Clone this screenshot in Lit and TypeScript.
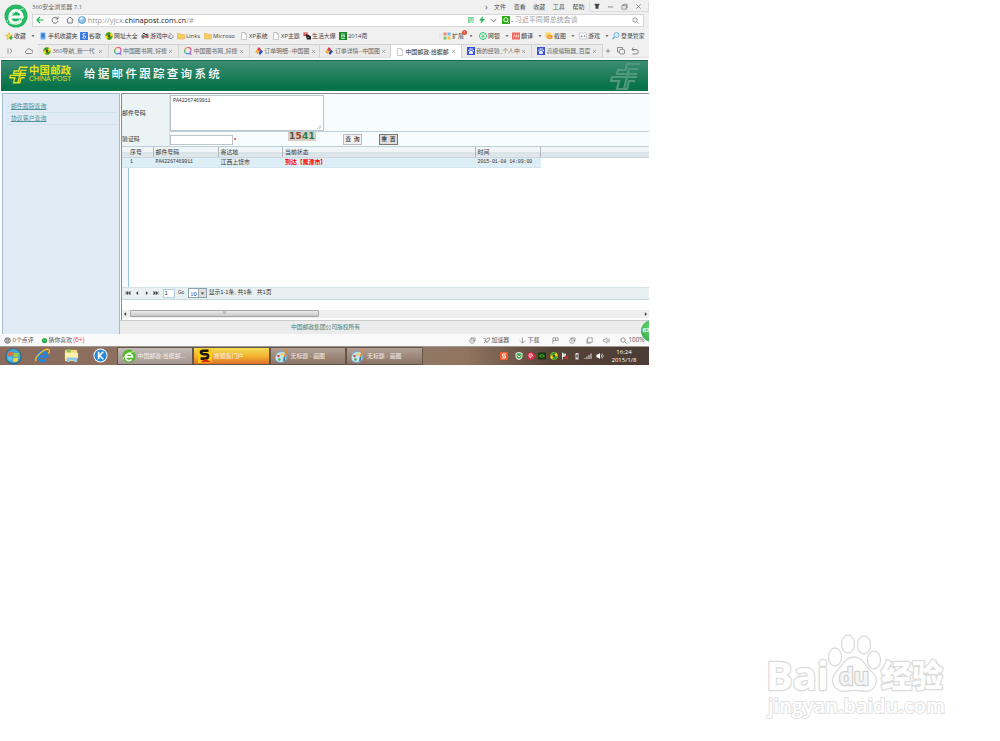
import { LitElement, html, svg, css } from 'lit';
import { customElement, property } from 'lit/decorators.js';

const icons: Record<string, unknown> = {
  star: svg`<path d="M8 1l2 5 5 .5-4 3.500 1 5-4-2.500-4 2.500 1-5-4-3.500L6 6z" fill="#ffe15a" stroke="#d9a520"/><path d="M12 8v7M8.500 11.500h7" stroke="#35ad4e" stroke-width="3"/>`,
  phone: svg`<rect x="3" y="1" width="10" height="14" rx="1" fill="#6aaef2"/><rect x="5" y="3" width="6" height="8" fill="#3478d8"/>`,
  google: svg`<rect width="16" height="16" rx="1" fill="#3b78e7"/><path d="M11 3H8a2 2.500 0 1 0 1 4.500M9 7c4 2 2 6-1 6s-4-4 1-4" fill="none" stroke="#fff" stroke-width="1.500"/>`,
  nav360: svg`<circle cx="8" cy="8" r="7.500" fill="#f8d90f"/><path d="M1 9a7 7 0 0 1 11-7L8 6C5 5 3 7 1 9zM15 7a7 7 0 0 1-11 7l4-4c3 1 5-1 7-3z" fill="#2d9e31"/><path d="M5 8h6M8 5v6" stroke="#123" stroke-width="2"/>`,
  game: svg`<path d="M1 6h6v7H1zM9 4h6v8H9z" fill="#777"/><path d="M3 5l3-3 3 4 3-3" stroke="#333" fill="none" stroke-width="2"/><path d="M5 9h6" stroke="#d44" stroke-width="2"/>`,
  folder: svg`<path d="M1 3h5l2 2h7v9H1z" fill="#f6cf63" stroke="#dfa93a"/>`,
  page: svg`<path d="M3 1h7l3 3v11H3z" fill="#fff" stroke="#999"/><path d="M10 1v3h3" fill="none" stroke="#999"/>`,
  life: svg`<path d="M1 1h8v7H1z" fill="#c33"/><path d="M5 6l5-1 6 4v6H8z" fill="#222"/><path d="M3 3h4M3 6h2M9 11h3" stroke="#fff"/>`,
  bean: svg`<rect width="16" height="16" fill="#168a2b"/><path d="M4 4h8M5 7h6v3H5zM4 13h8" stroke="#fff" stroke-width="1.300" fill="none"/>`,
  grid: svg`<path d="M1 1h6v6H1z" fill="#f58a6a"/><path d="M9 1h6v6H9z" fill="#6db8ef"/><path d="M1 9h6v6H1z" fill="#77c977"/><path d="M9 9h6v6H9z" fill="#f6c34c"/>`,
  bank: svg`<circle cx="8" cy="8" r="7" fill="#dff8e8" stroke="#3cc47a" stroke-width="2"/><path d="M5 4l3 4 3-4M8 8v5M5 9h6" stroke="#3cc47a" stroke-width="1.500" fill="none"/>`,
  trans: svg`<rect y="1" width="16" height="14" fill="#ef6860"/><path d="M3 11l2-6 2 6M9 5v6M13 5v6M9 8h4" stroke="#fff" fill="none"/>`,
  cut: svg`<rect x="1" y="1" width="11" height="11" fill="#f7d26a"/><rect x="5" y="6" width="10" height="8" fill="#f09b31"/><path d="M7 11l2-2 3 3" stroke="#fff" fill="none"/>`,
  pad: svg`<rect x="1" y="2" width="14" height="12" fill="#fff" stroke="#889" stroke-dasharray="3 1"/><path d="M5 6v5M2.500 8.500h5" stroke="#678"/><circle cx="11" cy="8" r="1.500" fill="#678"/>`,
  key: svg`<circle cx="9" cy="6" r="5" fill="#dbeeff" stroke="#5aa6e2" stroke-width="1.500"/><path d="M5 10l-4 4" stroke="#5aa6e2" stroke-width="2.500"/>`,
  haosou: svg`<path d="M3 12A6 6 0 0 1 2 5" stroke="#3bb55c"/><path d="M2 5a6 6 0 0 1 6-4" stroke="#f08a2c"/><path d="M8 1a6 6 0 0 1 6 6" stroke="#ee4e86"/><path d="M14 7a6 6 0 0 1-4 6l5 2" stroke="#a25bd0"/><path d="M3 12a6 6 0 0 0 7 1" stroke="#39a5e8"/>`,
  order: svg`<path d="M8 0l4 5-4 4-4-4z" fill="#e33641"/><path d="M4 5l4 4-3 5-5-4z" fill="#f5b52b"/><path d="M12 5l4 4-6 7-3-4z" fill="#344aae"/>`,
  baidu: svg`<rect width="16" height="16" fill="#3653df"/><circle cx="4" cy="7" r="1.500"/><circle cx="6.500" cy="4" r="1.600"/><circle cx="10" cy="4" r="1.600"/><circle cx="12.500" cy="7" r="1.500"/><path d="M8 7c2 0 5 4 4 6-1 1-7 1-8 0-1-2 2-6 4-6z"/>`,
  collapse: svg`<path d="M4 3v10M8 3l4 5-4 5" fill="none" stroke="#777" stroke-width="1.500"/>`,
  cloud: svg`<path d="M4 13a3 3 0 0 1-1-6 5 5 0 0 1 9-1 3.500 3.500 0 0 1 1 7z" fill="none" stroke="#777" stroke-width="1.700"/>`,
  back: svg`<path d="M15 8H2M8 2L2 8l6 6" fill="none" stroke="#22b14c" stroke-width="2.400"/>`,
  reload: svg`<path d="M13 5a6 6 0 1 0 1 5M14 1v5H9" fill="none" stroke="#666" stroke-width="1.700"/>`,
  home: svg`<path d="M1 8l7-6 7 6M3.500 7v7h9V7" fill="none" stroke="#666" stroke-width="1.700"/>`,
  globe: svg`<circle cx="8" cy="8" r="7" fill="#8fc4ee" stroke="#4f93d0" stroke-width="1.500"/><path d="M3 6c2-4 6-4 8-2-2 3-4 2-5 5z" fill="#edf8ff"/>`,
  qr: svg`<path d="M1 1h5v5H1zM9 1h6v5H9zM1 9h5v6H1zM9 9h2v6M14 9v2M14 13v2" fill="none" stroke="#3cbf65" stroke-width="2"/>`,
  bolt: svg`<path d="M10 0L2 9h5l-2 7 9-10H9z" fill="#1fb952"/>`,
  down: svg`<path d="M2 5l6 6 6-6" fill="none" stroke="#555" stroke-width="2"/>`,
  soGreen: svg`<rect width="16" height="16" fill="#2bad13"/><circle cx="7.500" cy="7.500" r="4" fill="none" stroke="#fff" stroke-width="1.800"/><path d="M10 10l4 4" stroke="#fff" stroke-width="2"/>`,
  search: svg`<circle cx="7" cy="7" r="5" fill="none" stroke="#777" stroke-width="1.700"/><path d="M11 11l4 4" stroke="#777" stroke-width="1.700"/>`,
  shirt: svg`<path d="M1 3l4-2q3 3 6 0l4 2-2 4-1-1v9H4V6L3 7z" fill="#444"/>`,
  min: svg`<path d="M2 9h12" stroke="#555" stroke-width="1.500"/>`,
  max: svg`<path d="M2 6h10v8H2zM5 6V3h9v8h-2" fill="none" stroke="#555" stroke-width="1.300"/>`,
  close: svg`<path d="M3 3l10 10M13 3L3 13" stroke="#666" stroke-width="1.500"/>`,
  plus: svg`<path d="M8 2v12M2 8h12" stroke="#666" stroke-width="1.800"/>`,
  copy: svg`<path d="M1 4V1h10v3M1 4v6h3" fill="none" stroke="#666" stroke-width="1.400"/><rect x="5" y="5" width="10" height="9" rx="2" fill="none" stroke="#666" stroke-width="1.400"/>`,
  undo: svg`<path d="M5 1L2 5l4 4M2 5h8a4 4 0 0 1 0 9H3" fill="none" stroke="#666" stroke-width="1.600"/>`,
  face: svg`<circle cx="8" cy="8" r="6.500" fill="#ccc" stroke="#777" stroke-width="2"/><path d="M3 5h10M5 8h1M10 8h1M5 11h6" stroke="#555" stroke-width="1.500"/>`,
  dot: svg`<circle cx="8" cy="8" r="6" fill="#27ae4c"/><path d="M5 8h6" stroke="#8be0a0"/>`,
  refreshBox: svg`<circle cx="7" cy="9" r="5.500" fill="none" stroke="#777" stroke-width="1.400"/><path d="M5 6V2h9v6h-4M4 9h6" fill="none" stroke="#777" stroke-width="1.400"/>`,
  rocket: svg`<path d="M2 14l4-4M4 8l7-6h4v4l-6 7-1-3-4-2M1 3h5" fill="none" stroke="#666" stroke-width="1.500"/>`,
  dl: svg`<path d="M8 1v13M2 8l6 6 6-6" fill="none" stroke="#777" stroke-width="1.500"/>`,
  flag: svg`<path d="M2 15V2h12v6H2M8 2v6" fill="none" stroke="#777" stroke-width="1.500"/>`,
  win: svg`<rect x="4" y="2" width="10" height="10" fill="none" stroke="#777" stroke-width="1.500"/><path d="M2 5v9h9" fill="none" stroke="#777" stroke-width="1.500"/>`,
  sound: svg`<path d="M1 6h3l5-4v12l-5-4H1zM11 5q3 3 0 6M13 3q5 5 0 10" fill="none" stroke="#777" stroke-width="1.300"/>`,
  orb: svg`<circle cx="8" cy="8" r="7.800" fill="#28698f"/><circle cx="8" cy="7.500" r="6.600" fill="#4aa3cb"/><path d="M3 5q2-2 4.500-1L7 7.500q-2-1-4.500 0z" fill="#f06a32"/><path d="M8.500 4.500q2 1 4.500 0l-.5 3.500q-2 1-4.500 0z" fill="#9bd13b"/><path d="M2.500 8.500q2-1 4.500 0L6.500 12q-2-1-4 0z" fill="#5dc1f4"/><path d="M8 9q2 1 4.500 0L12 12.500q-2 1-4.500 0z" fill="#fbd63b"/>`,
  ie: svg`<path d="M3 9h10a5 5 0 1 0-1.500 3.500" fill="none" stroke="#2385dc" stroke-width="3"/><path d="M1 14C-1 10 11-1 15 2c1 1 0 3-1 4" fill="none" stroke="#f3ba2c" stroke-width="1.500"/>`,
  explorer: svg`<path d="M1 2h13v12H1z" fill="#f4db83"/><path d="M3 1h4v4H3z" fill="#83bd5b"/><path d="M1 5h14v6H1z" fill="#fff0ac"/><path d="M3 10h11v5h-3v-2H6v2H3z" fill="#8fcbe7"/>`,
  kugou: svg`<circle cx="8" cy="8" r="7.500" fill="#fff"/><circle cx="8" cy="8" r="6.500" fill="#2488da"/><path d="M6 4v8M11 4L7 8l4 4" fill="none" stroke="#fff" stroke-width="1.800"/>`,
  green: svg`<circle cx="8" cy="8" r="7.500" fill="#4fb92c"/><path d="M4 9h8a4 4 0 1 0-1 3" fill="none" stroke="#fff" stroke-width="2"/><path d="M1 12Q3 4 14 3" stroke="#d9f7a5" fill="none"/>`,
  sogou: svg`<rect width="16" height="16" fill="#ffca0a"/><path d="M12 2H6C2 2 3 6 7 6h2c4 0 3 5-1 5H3" fill="none" stroke="#1a1612" stroke-width="3"/><path d="M3 15l5-4 8 4z" fill="#d92516"/>`,
  paint: svg`<path d="M8 3c5 0 6 4 5 8-1 3-4 5-8 4-4 0-6-4-4-8 1-3 4-4 7-4z" fill="#c4e6f5" stroke="#6ea6cb"/><circle cx="4" cy="8" r="1.500" fill="#d74a3a"/><circle cx="8" cy="6" r="1.500" fill="#f3ca38"/><circle cx="5" cy="12" r="1.500" fill="#52a54c"/><path d="M14 0L11 9" stroke="#e48c2e" stroke-width="2.200"/><path d="M11 9l-1 5" stroke="#4779a5" stroke-width="2"/>`,
  sg: svg`<rect width="16" height="16" rx="2" fill="#f15d32"/><path d="M12 4H5v4h6v4H4" fill="none" stroke="#fff" stroke-width="2"/>`,
  shield: svg`<path d="M8 0l7 2v6c0 4-3 7-7 8-4-1-7-4-7-8V2z" fill="#eee"/><path d="M8 2l5 1.500V8c0 3-2 5-5 6-3-1-5-3-5-6V3.500z" fill="#43ad49"/><path d="M5 7l3 3 3-3" stroke="#fff" fill="none" stroke-width="2"/>`,
  music: svg`<circle cx="8" cy="8" r="7.500" fill="#dc2340"/><path d="M9 3q-6 0-5 5 1 4 4 4V5q4 0 4 4" fill="none" stroke="#fff" stroke-width="1.500"/>`,
  nvidia: svg`<rect y="1" width="16" height="14" fill="#173b13"/><path d="M2 8q5-7 12 0-7 6-12 0z" fill="#50aa22"/><circle cx="8" cy="8" r="2" fill="#183915"/>`,
  netx: svg`<path d="M2 3h8v7H2z" fill="#d9d9d9"/><path d="M3 1v14" stroke="#fff" stroke-width="1.500"/><path d="M8 8l6 6m0-6l-6 6" stroke="#e22" stroke-width="3"/>`,
  battery: svg`<path d="M5 2h6v13H5z" fill="#ddd"/><path d="M6 5h4v6H6z" fill="#777"/>`,
  signal: svg`<path d="M1 14v-2h2v2M5 14v-5h2v5M9 14V6h2v8M13 14V3h2v11" fill="#ddd"/>`,
  speaker: svg`<path d="M1 5h3l4-3v12l-4-3H1z" fill="#fff"/><path d="M10 5q3 3 0 6M12 3q5 5 0 10" stroke="#fff" fill="none" stroke-width="1.300"/>`,
  first: svg`<path d="M2 3v10M8 3L3 8l5 5zM14 3L9 8l5 5z" fill="#444" stroke="#444"/>`,
  prev: svg`<path d="M11 3L5 8l6 5z" fill="#444"/>`,
  next: svg`<path d="M5 3l6 5-6 5z" fill="#444"/>`,
  last: svg`<path d="M14 3v10M8 3l5 5-5 5zM2 3l5 5-5 5z" fill="#444" stroke="#444"/>`,
  caret: svg`<path d="M2 5h12l-6 7z" fill="#555"/>`,
};

@customElement('ui-icon')
export class UiIcon extends LitElement {
  @property({ type: String }) name = 'page';
  @property({ type: Number }) size = 8;

  static styles = css`
    :host { display: inline-flex; flex: none; }
    svg { display: block; }
    .haosou { fill: none; stroke-width: 2.2; }
    .baidu { fill: #fff; }
  `;

  render() {
    return html`<svg class="${this.name}" width="${this.size}" height="${this.size}" viewBox="0 0 16 16">${icons[this.name]}</svg>`;
  }
}

// [icon, label, width, has dropdown]
const bookmarks: [string, string, number, boolean?][] = [
  ['star', '收藏', 34, true],
  ['phone', '手机收藏夹', 41],
  ['google', '谷歌', 25],
  ['nav360', '网址大全', 36],
  ['game', '游戏中心', 36],
  ['folder', 'Links', 27],
  ['folder', 'Microso', 36],
  ['page', 'XP系统', 32],
  ['page', 'XP主题', 31],
  ['life', '生活大爆', 36],
  ['bean', '2014南', 36],
];

const tools: [string, string, number, boolean?][] = [
  ['grid', '扩展', 36, true],
  ['bank', '网银', 33, true],
  ['trans', '翻译', 33, true],
  ['cut', '截图', 34, true],
  ['pad', '游戏', 33, true],
  ['key', '登录管家', 33],
];

const tabs = [
  ['nav360', '360导航_新一代'],
  ['haosou', '中国图书网_好搜'],
  ['haosou', '中国图书网_好搜'],
  ['order', '订单明细--中国图'],
  ['order', '订单详情--中国图'],
  ['page', '中国邮政-给据邮'],
  ['baidu', '我的经验_个人中'],
  ['baidu', '高级编辑器_百度'],
];
const activeTab = 5;

@customElement('browser-chrome')
export class BrowserChrome extends LitElement {
  static styles = css`
    :host {
      display: block;
      height: 58px;
      background: #f0f0f0;
      color: #444;
      font: 5.9px/8px 'Open Sans', 'Noto Sans CJK SC', sans-serif;
      white-space: nowrap;
    }
    .top { display: grid; grid-template-columns: 32px 1fr; height: 28px; }
    .logo { padding: 4px 0 0 4px; }
    .title { display: flex; height: 13.500px; align-items: center; color: #666; font-size: 6px; }
    .menu { display: flex; margin-left: auto; height: 12px; align-items: center; color: #555; }
    .menu span { width: 19.600px; }
    .menu .more { width: 9px; font-size: 9px; }
    .menu span:last-child { width: 16.600px; }
    .win { display: flex; justify-content: space-between; align-items: center; width: 60px; height: 10px; padding: 0 6px 0 4px; border: 1px solid #ddd; border-top: 0; box-sizing: border-box; }
    .address { display: flex; align-items: center; box-sizing: border-box; height: 13px; margin-right: 5px; background: #fff; border: 1px solid #d6d6d6; }
    .btn { display: flex; width: 14.900px; height: 11px; align-items: center; justify-content: center; background: #f8f8f8; box-shadow: 1px 0 #e4e4e4; box-sizing: border-box; }
    .url { margin: 0 auto 0 2px; color: #999; font-size: 7.500px; }
    .url b { color: #222; font-weight: 400; }
    .quick { display: flex; align-items: center; gap: 4px; width: 34px; }
    .hot { color: #999; width: 121px; font-size: 7px; padding-left: 1px; }
    .hot b { color: #333; }
    .address .end { margin-right: 4px; }
    .marks { display: flex; height: 16px; align-items: center; padding: 0 4px 0 5px; box-sizing: border-box; }
    .mark { display: flex; align-items: center; gap: 1px; position: relative; }
    .mark .arrow { margin-left: 4px; }
    .gap { margin-left: auto; width: 6px; color: #bbb; }
    .badge { position: absolute; left: 19px; top: -2px; width: 5px; height: 5px; border-radius: 50%; background: #e84c31; color: #fff; font-size: 4px; line-height: 5px; text-align: center; }
    .tabs { display: flex; height: 14px; align-items: stretch; border-bottom: 1px solid #ddd; box-sizing: border-box; }
    .side { display: flex; align-items: center; width: 38px; gap: 11px; padding-left: 6px; box-sizing: border-box; }
    .tab { display: flex; align-items: center; width: 70.600px; box-sizing: border-box; padding: 0 5px; gap: 1.500px; background: #ebebeb; border: 1px solid #d2d2d2; border-bottom: 0; border-left-width: 0; color: #666; }
    .tab span { flex: 1; }
    .tab.active { background: #fff; color: #222; height: 14px; }
    .end-tabs { display: flex; align-items: center; gap: 6px; padding-left: 2px; }
  `;

  mark([icon, label, width, drop]: [string, string, number, boolean?]) {
    return html`
      <div class="mark" style="width:${width}px">
        <ui-icon name=${icon} .size=${8}></ui-icon>
        <span>${label}</span>
        ${drop ? html`<ui-icon class="arrow" name="caret" .size=${4}></ui-icon>` : ''}
        ${label === '扩展' ? html`<span class="badge">1</span>` : ''}
      </div>
    `;
  }

  render() {
    return html`
      <div class="top">
        <div class="logo">
          <svg width="24" height="24" viewBox="0 0 24 24">
            <circle cx="12" cy="12" r="11.500" fill="#27b863" />
            <path d="M6 13h12c0-8-11-9-12-1-1 8 8 9 11 4" fill="none" stroke="#fff" stroke-width="3" />
            <path d="M3 18C7 10 13 5 20 5M5 19q9 4 15-7" fill="none" stroke="#baf0ce" />
          </svg>
        </div>
        <div>
          <div class="title">
            360安全浏览器 7.1
            <div class="menu">
              <span class="more">›</span><span>文件</span><span>查看</span><span>收藏</span><span>工具</span><span>帮助</span>
            </div>
            <div class="win">
              <ui-icon name="shirt" .size=${6}></ui-icon>
              <ui-icon name="min" .size=${7}></ui-icon>
              <ui-icon name="max" .size=${7}></ui-icon>
              <ui-icon name="close" .size=${7}></ui-icon>
            </div>
          </div>
          <div class="address">
            <div class="btn"><ui-icon name="back" .size=${8}></ui-icon></div>
            <div class="btn"><ui-icon name="reload" .size=${8}></ui-icon></div>
            <div class="btn"><ui-icon name="home" .size=${8}></ui-icon></div>
            <ui-icon name="globe" .size=${8}></ui-icon>
            <div class="url">http://yjcx.<b>chinapost.com.cn</b>/#</div>
            <div class="quick">
              <ui-icon name="qr" .size=${6}></ui-icon>
              <ui-icon name="bolt" .size=${8}></ui-icon>
              <ui-icon name="down" .size=${7}></ui-icon>
            </div>
            <ui-icon name="soGreen" .size=${8}></ui-icon>
            <div class="hot"><b>.</b> 习近平同哥总统会谈</div>
            <ui-icon class="end" name="search" .size=${7}></ui-icon>
          </div>
        </div>
      </div>
      <div class="marks">
        ${bookmarks.map((b) => this.mark(b))}
        <span class="gap">⋮</span>
        ${tools.map((t) => this.mark(t))}
      </div>
      <div class="tabs">
        <div class="side"><ui-icon name="collapse" .size=${8}></ui-icon><ui-icon name="cloud" .size=${8}></ui-icon></div>
        ${tabs.map(([icon, label], i) => html`
          <div class="tab ${i === activeTab ? 'active' : ''}">
            <ui-icon name=${icon} .size=${8}></ui-icon>
            <span>${label}</span>
            <ui-icon name="close" .size=${5}></ui-icon>
          </div>
        `)}
        <div class="end-tabs">
          <ui-icon name="plus" .size=${6}></ui-icon>
          <ui-icon name="copy" .size=${8}></ui-icon>
          <ui-icon name="undo" .size=${8}></ui-icon>
        </div>
      </div>
    `;
  }
}

const emblem = svg`<path d="M30 2H17l-1.500 6H8l-1 4h20M28 7h-9l-5 20H7l2-8H1l1-4h25M25 19h-6l-2 8h-3" fill="none" stroke="currentColor" stroke-width="2.200"/>`;

@customElement('post-page')
export class PostPage extends LitElement {
  static styles = css`
    :host {
      display: block;
      height: 276px;
      background: #fff;
      color: #333;
      font: 5.9px/8px 'Liberation Sans', 'Noto Sans CJK SC', sans-serif;
      white-space: nowrap;
      overflow: hidden;
    }
    .banner { display: flex; box-sizing: border-box; height: 31px; margin: 2px 1px 2px; padding-left: 8px; background: linear-gradient(#3d8c73, #08734a 85%); border-top: 1px solid #1d6b4f; }
    .emblem { color: #e8e318; padding-top: 5px; width: 20px; }
    .brand { color: #e8e318; width: 55px; font-size: 7px; line-height: 7px; padding-top: 6px; }
    .brand b { display: block; font-size: 10.300px; line-height: 8px; letter-spacing: .3px; }
    .name { color: #fff; font: 500 11.500px/26px 'Liberation Serif', 'Noto Sans CJK SC', serif; letter-spacing: 2.300px; }
    .ghost { margin: 1px 8px 0 auto; color: #509980; }
    .cols { display: flex; height: 241px; }
    .nav { box-sizing: border-box; width: 117.500px; margin-left: 2px; padding: 7px 3px 0 4px; background: #e1ebf5; border: 1px solid #9fbbd6; border-bottom: 0; }
    .nav div { height: 11px; line-height: 11px; border-bottom: 1px solid #d0e2ec; color: #4f9297; }
    .nav u { margin-left: 2px; }
    .main { width: 529.500px; display: flex; flex-direction: column; }
    .frame { height: 227px; box-sizing: border-box; margin-left: 1.500px; border-left: 1px solid #8c8c8c; border-top: 1px solid #8c8c8c; }
    .row { display: grid; grid-template-columns: 48px 1fr; border-bottom: 1px solid #bdd0da; background: #f6fdfc; box-sizing: border-box; }
    .row.a { height: 38px; }
    .row.b { height: 14.500px; }
    .row label { display: flex; align-items: center; background: #ebf3f4; border-right: 1px solid #d3dfe6; }
    .area { box-sizing: border-box; width: 154px; height: 36px; margin: 1px 0; padding: 1px 2px; background: #fff; border: 1px solid #bcc6ca; font: 5px/8px 'Liberation Mono', monospace; letter-spacing: -.12px; display: flex; justify-content: space-between; }
    .area svg { align-self: flex-end; }
    .mono { font: 5px/9px 'Liberation Mono', monospace; letter-spacing: -.12px; }
    .fields { display: flex; }
    .text { width: 61px; height: 8px; margin: 2.500px 0 0; background: #fff; border: 1px solid #bcc6ca; }
    .req { color: #f00; font-weight: 700; width: 54px; padding: 4px 0 0 1px; }
    .captcha { width: 28px; height: 9px; margin-right: 27px; background: #d5cfc4; font: 700 9px/9px 'DejaVu Sans', sans-serif; text-align: center; color: #5d5148; letter-spacing: .3px; }
    .captcha i { font-style: normal; color: #a23a35; }
    .captcha em { font-style: normal; color: #367a45; }
    .btn { box-sizing: border-box; width: 19px; height: 11px; margin: 2px 17px 0 0; border: 1px solid #bbb; background: #f2f2f2; line-height: 9px; text-align: center; color: #111; word-spacing: 1px; }
    .btn.reset { background: #ddd; border-color: #777; }
    .head { display: flex; height: 11px; box-sizing: border-box; padding-left: 6px; line-height: 11px; background: linear-gradient(#f0f5f8 0 45%, #d9e4e9 55%, #dfe8ec); border-bottom: 1px solid #ccd5d9; }
    .head span { box-sizing: border-box; border-right: 1px solid #aebac2; padding-left: 2px; }
    .data { display: flex; width: 419px; height: 10px; box-sizing: border-box; line-height: 9px; background: #deeef6; border-bottom: 1px solid #d3e5ee; padding-left: 6px; }
    .data span { padding-left: 2px; box-sizing: border-box; }
    .hit { color: #f00; font-weight: 700; }
    .blank { height: 119px; width: 6px; border-right: 1px solid #94c5e2; background: #f6fafc; }
    .pager { display: flex; height: 13px; box-sizing: border-box; align-items: center; padding-left: 3px; background: #e8f0f2; border-top: 1px solid #d5e2e6; border-bottom: 1px solid #c5d8e2; gap: 3.400px; }
    .pno { width: 9px; height: 7px; border: 1px solid #b2cee0; background: #fff; padding-left: 1px; line-height: 7px; }
    .go { width: 7px; font-size: 4.700px; }
    .sel { display: flex; width: 16px; height: 8px; border: 1px solid #8aa2ad; background: #fff; padding-left: 1px; align-items: center; justify-content: space-between; font: 6.500px 'Liberation Serif', serif; }
    .drop { display: flex; width: 7px; height: 8px; background: #ddd; align-items: center; justify-content: center; box-shadow: -1px 0 #9aa; }
    .count { margin: -2px 0 0 -2px; letter-spacing: -.1px; }
    .bar { display: flex; height: 8px; align-items: center; margin-top: 10px; background: #eee; }
    .thumb { box-sizing: border-box; width: 189px; height: 7px; margin: 0 auto 0 2px; border: 1px solid #a6a6a6; border-radius: 1px; background: linear-gradient(#ececec, #c7c7c7); text-align: center; line-height: 4px; font-size: 4px; color: #777; }
    .foot { height: 14px; box-sizing: border-box; background: #ececec; border-top: 1px solid #ccc; line-height: 13px; color: #4b8173; text-indent: 171.500px; letter-spacing: -.15px; }
    .w1 { width: 25.500px; } .w2 { width: 65px; } .w3 { width: 64.500px; } .w4 { width: 192.500px; } .w5 { width: 65px; }
  `;

  render() {
    return html`
      <div class="banner">
        <div class="emblem"><svg width="19" height="18" viewBox="0 0 30 29">${emblem}</svg></div>
        <div class="brand"><b>中国邮政</b>CHINA POST</div>
        <div class="name">给据邮件跟踪查询系统</div>
        <div class="ghost"><svg width="30" height="29" viewBox="0 0 30 29">${emblem}</svg></div>
      </div>
      <div class="cols">
        <div class="nav">
          <div>·<u>邮件跟踪查询</u></div>
          <div>·<u>协议客户查询</u></div>
        </div>
        <div class="main">
          <div class="frame">
            <div class="row a">
              <label>邮件号码</label>
              <div class="area">PA42267469911<svg width="4" height="4"><path d="M0 4L4 0M2 4L4 2" stroke="#999" stroke-width=".6" /></svg></div>
            </div>
            <div class="row b">
              <label>验证码</label>
              <div class="fields">
                <div class="text"></div>
                <div class="req">*</div>
                <div class="captcha">1<i>5</i><em>41</em></div>
                <div class="btn">查 询</div>
                <div class="btn reset">重 置</div>
              </div>
            </div>
            <div class="head">
              <span class="w1">序号</span><span class="w2">邮件号码</span><span class="w3">寄达地</span><span class="w4">当前状态</span><span class="w5">时间</span>
            </div>
            <div class="data">
              <span class="w1 mono">1</span><span class="w2 mono">PA42267469911</span><span class="w3">江西上饶市</span><span class="w4 hit">到达【鹰潭市】</span><span class="w5 mono">2015-01-08 14:09:00</span>
            </div>
            <div class="blank"></div>
            <div class="pager">
              <ui-icon name="first" .size=${6}></ui-icon>
              <ui-icon name="prev" .size=${6}></ui-icon>
              <ui-icon name="next" .size=${6}></ui-icon>
              <ui-icon name="last" .size=${6}></ui-icon>
              <span class="pno">1</span>
              <span class="go">Go</span>
              <span class="sel">10<span class="drop"><ui-icon name="caret" .size=${5}></ui-icon></span></span>
              <span class="count">显示1-1条, 共1条 &nbsp; 共1页</span>
            </div>
            <div class="bar">
              <ui-icon name="prev" .size=${6}></ui-icon>
              <div class="thumb">III</div>
              <ui-icon name="next" .size=${6}></ui-icon>
            </div>
          </div>
          <div class="foot">中国邮政集团公司版权所有</div>
        </div>
      </div>
    `;
  }
}

const statusItems: [string, string, number][] = [
  ['refreshBox', '', 14],
  ['rocket', '加速器', 36],
  ['dl', '下载', 33],
  ['flag', '', 17],
  ['refreshBox', '', 17],
  ['win', '', 17],
  ['sound', '', 17],
  ['search', '100%', 31],
];

const tasks = [
  ['green', '中国邮政-给据邮...', 'on'],
  ['sogou', '搜狐焦门户', 'hot'],
  ['paint', '无标题 - 画图', ''],
  ['paint', '无标题 - 画图', ''],
];

const tray: [string, number][] = [
  ['sg', 15], ['shield', 11.5], ['music', 11.5], ['nvidia', 11.5], ['nav360', 11.5],
  ['netx', 11.5], ['battery', 11.5], ['signal', 11.5], ['speaker', 12],
];

@customElement('desktop-bars')
export class DesktopBars extends LitElement {
  static styles = css`
    :host { display: block; font: 5.9px/8px 'Open Sans', 'Noto Sans CJK SC', sans-serif; color: #555; white-space: nowrap; }
    .status { display: flex; align-items: center; height: 12px; padding-left: 4px; background: #f9f9f9; }
    .status .like { display: flex; align-items: center; gap: 1px; margin-left: 7px; }
    .red { color: #f04848; font-size: 6.500px; }
    .right { display: flex; margin-left: auto; }
    .item { display: flex; align-items: center; gap: 1.500px; }
    .item:last-child { font-size: 6.300px; margin-right: -2px; }
    .task { display: flex; align-items: center; height: 19px; box-sizing: border-box; color: #fff; border-top: 1px solid #9e9894; background: linear-gradient(90deg, #8a6b5c, #937a69 60%, #90745f 72%, #574338 85%, #4b3c35); }
    .pin { display: flex; width: 29.500px; justify-content: center; }
    .pins { display: flex; width: 116.500px; margin-left: -1px; padding-right: 1px; }
    .app { display: flex; align-items: center; gap: 2px; box-sizing: border-box; width: 76.500px; height: 18px; padding-left: 4px; border: 1px solid #63544c; background: linear-gradient(#b39f94, #8a7464); color: #f6f0ec; }
    .app.on { background: linear-gradient(#c4bcb7, #a29790); }
    .app.hot { background: linear-gradient(#f2dc58, #f5b52f 50%, #dc702b); }
    .tray { display: flex; margin-left: auto; }
    .tray span { display: flex; align-items: center; }
    .clock { width: 33px; text-align: center; line-height: 8.500px; font-size: 6px; margin-right: 8.500px; }
  `;

  render() {
    return html`
      <div class="status">
        <ui-icon name="face" .size=${7}></ui-icon>&nbsp;0个点评
        <span class="like"><ui-icon name="dot" .size=${7}></ui-icon>猜你喜欢 <span class="red">(6+)</span></span>
        <div class="right">
          ${statusItems.map(([icon, label, width]) => html`
            <span class="item" style="width:${width}px"><ui-icon name=${icon} .size=${7}></ui-icon>${label}</span>
          `)}
        </div>
      </div>
      <div class="task">
        <div class="pins">
          ${['orb', 'ie', 'explorer', 'kugou'].map((n) => html`<span class="pin"><ui-icon name=${n} .size=${n === 'orb' ? 17 : 15}></ui-icon></span>`)}
        </div>
        ${tasks.map(([icon, label, kind]) => html`
          <div class="app ${kind}"><ui-icon name=${icon} .size=${14}></ui-icon>${label}</div>
        `)}
        <div class="tray">
          ${tray.map(([icon, width]) => html`<span style="width:${width}px"><ui-icon name=${icon} .size=${8}></ui-icon></span>`)}
        </div>
        <div class="clock">16:24<br />2015/1/8</div>
      </div>
    `;
  }
}

@customElement('app-root')
export class AppRoot extends LitElement {
  static styles = css`
    :host { display: block; width: 1000px; height: 741px; background: #fff; overflow: hidden; }
    .screen { position: relative; width: 649px; height: 365px; overflow: hidden; }
    .ball { position: absolute; left: 640.500px; top: 320px; width: 22px; height: 22px; border-radius: 50%; background: radial-gradient(circle at 50% 35%, #6fd97b, #2ca344); color: #fff; font: 700 6px/20px 'Open Sans', sans-serif; text-indent: 2px; }
    .watermark { display: block; margin: 255px 0 0 750px; }
    .line { fill: #fff; stroke: #dcdcdc; stroke-width: 1.300; }
    text.line { paint-order: stroke; stroke-width: 2.600; stroke-linejoin: round; }
    .latin { font: 700 40px 'Open Sans', sans-serif; }
    text.du { font: 700 24px 'Open Sans', sans-serif; fill: #f4f4f4; stroke: #d2d2d2; }
    .cjk { font: 900 31px 'Noto Sans CJK SC', sans-serif; }
    text.site { font: 600 20.500px 'Open Sans', sans-serif; stroke: #e2e2e2; stroke-width: 2; }
  `;

  render() {
    return html`
      <div class="screen">
        <browser-chrome></browser-chrome>
        <post-page></post-page>
        <desktop-bars></desktop-bars>
        <div class="ball">62</div>
      </div>
      <svg class="watermark" width="220" height="110" viewBox="0 0 220 110">
        <text class="line latin" x="16" y="70" textLength="63" lengthAdjust="spacingAndGlyphs">Bai</text>
        <ellipse class="line" cx="85" cy="37" rx="6.500" ry="9" />
        <ellipse class="line" cx="98" cy="24" rx="6.500" ry="9" />
        <ellipse class="line" cx="114" cy="25" rx="6.500" ry="9" />
        <ellipse class="line" cx="124" cy="40" rx="6.500" ry="9" />
        <path class="line" d="M104 37c9 0 11 9 17 14s7 10 4 15-9 6-14 5-8-1-13 0-11 0-14-5-2-10 3-15 8-14 17-14z" />
        <text class="line du" x="89" y="65" textLength="30" lengthAdjust="spacingAndGlyphs">du</text>
        <text class="line cjk" x="131" y="67" textLength="62" lengthAdjust="spacingAndGlyphs">经验</text>
        <text class="line site" x="18" y="93" textLength="177" lengthAdjust="spacingAndGlyphs">jingyan.baidu.com</text>
      </svg>
    `;
  }
}
